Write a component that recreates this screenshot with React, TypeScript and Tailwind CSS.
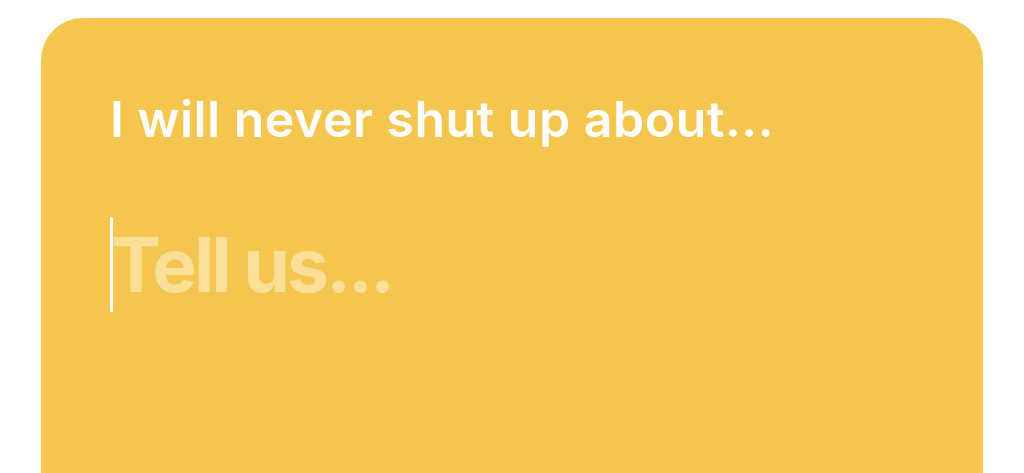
import React from "react";

export default function App() {
  return (
    <div className="h-[473px] w-[1024px] overflow-hidden bg-white pt-[18px] pl-[41px]" style={{ fontFamily: "Inter, 'Noto Sans', sans-serif" }}>
      <div className="h-[520px] w-[942px] rounded-[42px] bg-[#F5C64F] pl-[69px] pt-[76px]">
        <h1 className="text-[50px] font-semibold leading-none tracking-[0.01em] text-white">
          I will never shut up about...
        </h1>
        <div className="mt-[73px] flex items-center">
          <span className="h-[95px] w-[3px] rounded-full bg-white" />
          <span className="-ml-[2px] text-[75px] font-bold leading-none tracking-[-0.04em] text-[#F9DF98]">Tell us...</span>
        </div>
      </div>
    </div>
  );
}
